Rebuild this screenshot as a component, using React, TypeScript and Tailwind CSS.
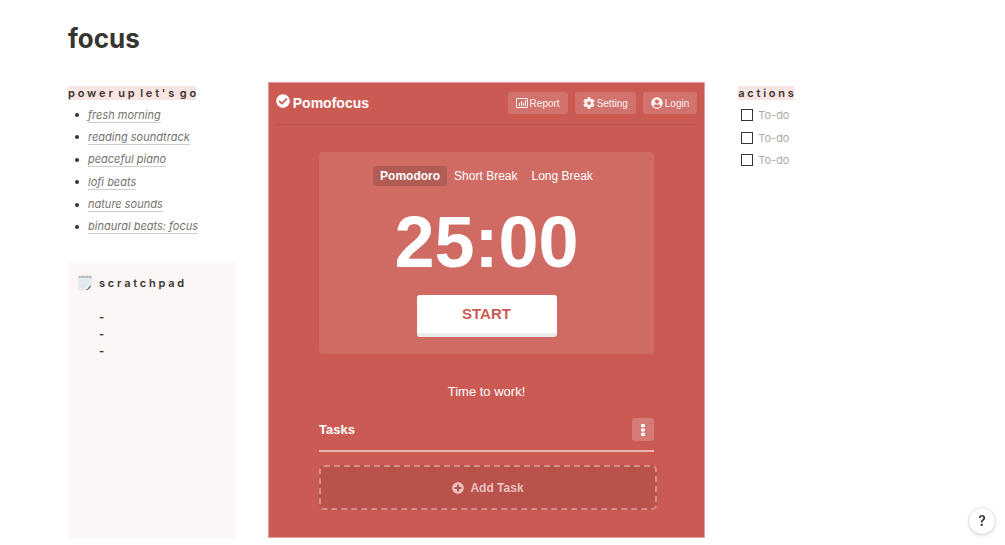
import React, { useState } from 'react';
import { FaCheckCircle, FaCog, FaUserCircle, FaPlusCircle } from 'react-icons/fa';

const playlists = [
  'fresh morning',
  'reading soundtrack',
  'peaceful piano',
  'lofi beats',
  'nature sounds',
  'binaural beats: focus',
];

const tabs = ['Pomodoro', 'Short Break', 'Long Break'];

const ReportIcon = () => (
  <svg viewBox="0 0 12 10" className="w-3 h-[10px]" fill="none" stroke="currentColor">
    <rect x="0.5" y="0.5" width="11" height="9" rx="0.5" />
    <path d="M3.5 8V5M5.5 8V3M7.5 8V4.5M9.5 8V2" strokeWidth="1.1" />
  </svg>
);

const NotepadIcon = () => (
  <svg viewBox="0 0 42 48" className="w-[14px] h-4 shrink-0">
    <path d="M1 4h40v29L28 47H1z" fill="#e6edf2" stroke="#d3dade" />
    <path d="M1 4h40v5H1z" fill="#d3d7da" />
    <path
      d="M4 2v7M9 2v7M14 2v7M19 2v7M24 2v7M29 2v7M34 2v7M38 2v7"
      stroke="#979da1"
      strokeWidth="2"
    />
    <path d="M6 17h30M6 23h30M6 29h28M6 35h19" stroke="#d8e1e8" />
    <path d="M41 31L26 47l-4-1 5-9z" fill="#f4f8fb" />
    <path d="M40 31c-4 3-7 3-9 7s-5 4-8 7h6c5-3 9-7 11-14z" fill="#686e73" />
  </svg>
);

const HeaderButton = ({ icon, label }: any) => (
  <button className="flex items-center gap-[2px] h-[22px] px-2 rounded-[3px] bg-white/15 text-[10px] text-white/90">
    {icon}
    {label}
  </button>
);

const Heading = ({ children }: any) => (
  <h2 className="text-[11px] leading-[14px] font-semibold whitespace-nowrap">
    <span className="bg-[#f8e4e3]">{children}</span>
  </h2>
);

const Pomodoro = () => {
  const [active, setActive] = useState('Pomodoro');

  return (
    <section className="bg-[#cb5a53] border border-[#dfa09c] px-[7px] pt-[9px] pb-[27px] text-white font-['Liberation_Sans',Arial,sans-serif]">
      {/* Header */}
      <header className="flex items-start justify-between pb-[10px] border-b border-[#bd524b]">
        <div className="flex items-center gap-[3px] text-sm leading-[22px] font-bold">
          <FaCheckCircle className="w-[14px] h-[14px] -mt-1" />
          Pomofocus
        </div>
        <div className="flex gap-[7px]">
          <HeaderButton icon={<ReportIcon />} label="Report" />
          <HeaderButton icon={<FaCog className="w-3 h-3" />} label="Setting" />
          <HeaderButton icon={<FaUserCircle className="w-3 h-3" />} label="Login" />
        </div>
      </header>

      <div className="w-full max-w-[335px] mx-auto">
        {/* Timer */}
        <div className="mt-[27px] pt-[14px] pb-[17px] flex flex-col items-center rounded-[4px] bg-white/10">
          <div className="flex">
            {tabs.map((tab) => (
              <button
                key={tab}
                onClick={() => setActive(tab)}
                className={`h-5 px-[7px] rounded-[3px] text-xs ${
                  active === tab ? 'bg-black/15 font-bold' : ''
                }`}
              >
                {tab}
              </button>
            ))}
          </div>
          <p className="mt-4 text-[72px] leading-20 font-bold">25:00</p>
          <button className="mt-[13px] w-[140px] h-[42px] rounded-[3px] bg-white border-b-4 border-[#ebebeb] text-[#cb5a53] text-[15px] font-bold">
            START
          </button>
        </div>

        <p className="mt-7 text-center text-[13px] leading-5">Time to work!</p>

        {/* Tasks */}
        <div className="mt-4 pb-[9px] flex items-center justify-between border-b-2 border-[#e8b3b0]">
          <h3 className="text-[13px] font-bold">Tasks</h3>
          <button
            aria-label="Task options"
            className="w-[22px] h-[23px] flex items-center justify-center rounded-[3px] bg-white/20"
          >
            <svg viewBox="0 0 4 12" className="w-1 h-3" fill="currentColor">
              <rect width="4" height="3.2" rx="0.8" />
              <rect y="4.4" width="4" height="3.2" rx="0.8" />
              <rect y="8.8" width="4" height="3.2" rx="0.8" />
            </svg>
          </button>
        </div>
        <button className="mt-[13px] w-[calc(100%+3px)] h-[45px] flex items-center justify-center gap-[6px] rounded-[5px] border-2 border-dashed border-[#d68e89] bg-[#b9524b] text-xs font-bold text-[#e9c1bf]">
          <FaPlusCircle className="w-3 h-3" />
          Add Task
        </button>
      </div>
    </section>
  );
};

export default function App() {
  return (
    <div className="relative min-h-screen bg-white px-[68px] pt-[23px] pb-1 text-[#37352f] font-[Inter,sans-serif]">
      <h1 className="text-[26px] leading-8 font-bold">focus</h1>

      <main className="mt-[27px] grid grid-cols-[168fr_438fr_200fr] gap-x-8">
        <div className="flex flex-col pt-1">
          <Heading>p o w e r&nbsp; u p&nbsp; l e t ' s&nbsp; g o</Heading>
          <ul className="mt-1 h-[134px] flex flex-col justify-between">
            {playlists.map((name) => (
              <li key={name} className="flex items-center h-[22px] gap-[9px] pl-[7px]">
                <span className="w-1 h-1 rounded-full bg-[#37352f]" />
                <a
                  href="#"
                  className="text-[11px] leading-[14px] italic text-[#73726e] border-b border-[#cfcecc] whitespace-nowrap"
                >
                  {name}
                </a>
              </li>
            ))}
          </ul>

          {/* Scratchpad */}
          <div className="mt-[25px] grow px-[10px] pt-3 bg-[#fdf6f6] text-[11px] leading-4 font-semibold">
            <div className="flex items-center gap-[7px]">
              <NotepadIcon />
              <h2 className="whitespace-nowrap">s c r a t c h p a d</h2>
            </div>
            <div className="mt-[18px] pl-[21px] leading-[17px] font-bold">
              <p>-</p>
              <p>-</p>
              <p>-</p>
            </div>
          </div>
        </div>

        <Pomodoro />

        <div className="pt-1 pl-px">
          <Heading>a c t i o n s</Heading>
          <div className="mt-1 h-[67px] flex flex-col justify-between">
            {[1, 2, 3].map((id) => (
              <label key={id} className="flex items-center gap-[5px] pl-[3px] text-[11px] leading-[22px] text-[#adaba8]">
                <input
                  type="checkbox"
                  className="w-3 h-3 appearance-none border border-[#37352f] checked:bg-[#37352f]"
                />
                To-do
              </label>
            ))}
          </div>
        </div>
      </main>

      <button className="fixed right-[10px] bottom-[11px] w-[26px] h-[26px] rounded-full bg-white text-sm font-semibold shadow-[0_0_2px_rgba(15,15,15,0.3),0_2px_4px_rgba(15,15,15,0.1)]">
        ?
      </button>
    </div>
  );
}
